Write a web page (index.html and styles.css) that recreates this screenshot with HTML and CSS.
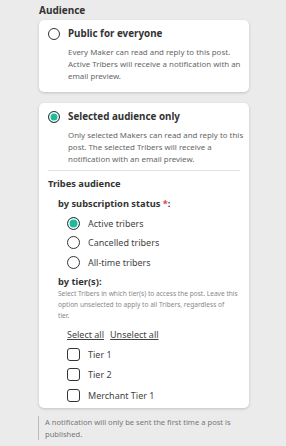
FILE: index.html
```html
<!DOCTYPE html>
<html>
<head>
	<meta charset="UTF-8">
	<link rel="stylesheet" href="styles.css">
</head>
<body>
	<div class="page">
		<h3 class="section-title">Audience</h3>

		<div class="card">
			<div class="option-head">
				<span class="radio"></span>
				<span class="option-title">Public for everyone</span>
			</div>
			<p class="option-desc">Every Maker can read and reply to this post.<br>Active Tribers will receive a notification with an<br>email preview.</p>
		</div>

		<div class="card card-selected">
			<div class="option-head">
				<span class="radio checked"></span>
				<span class="option-title">Selected audience only</span>
			</div>
			<p class="option-desc">Only selected Makers can read and reply to this<br>post. The selected Tribers will receive a<br>notification with an email preview.</p>

			<hr class="divider">

			<h4 class="group-title">Tribes audience</h4>
			<div class="sub">
				<div class="sub-title">by subscription status <span class="req">*</span>:</div>
				<ul class="choices">
					<li><span class="radio checked"></span>Active tribers</li>
					<li><span class="radio"></span>Cancelled tribers</li>
					<li><span class="radio"></span>All-time tribers</li>
				</ul>

				<div class="sub-title tier-title">by tier(s):</div>
				<p class="hint">Select Tribers in which tier(s) to access the post. Leave this<br>option unselected to apply to all Tribers, regardless of<br>tier.</p>

				<div class="links">
					<a href="#">Select all</a>
					<a href="#">Unselect all</a>
				</div>
				<ul class="choices checks">
					<li><span class="checkbox"></span>Tier 1</li>
					<li><span class="checkbox"></span>Tier 2</li>
					<li><span class="checkbox"></span>Merchant Tier 1</li>
				</ul>
			</div>
		</div>

		<p class="note">A notification will only be sent the first time a post is<br>published.</p>
	</div>
</body>
</html>
```
FILE: styles.css
```css
body {
	margin: 0;
	background: #ebebeb;
	font-family: "Noto Sans", "Open Sans", sans-serif;
	color: #333;
}

.page {
	width: 210px;
	padding: 4px 0 0 39px;
}

.section-title {
	margin: 0 0 4px 0;
	font-size: 10px;
	line-height: 12px;
	font-weight: bold;
	color: #333;
}

.card {
	background: #fff;
	border-radius: 5px;
	box-shadow: 0 1px 3px rgba(0, 0, 0, 0.18);
	padding: 7px 9px 10px 9px;
	margin-bottom: 11px;
}

.card-selected {
	padding-bottom: 6px;
}

.option-head {
	display: flex;
	align-items: center;
	gap: 8px;
	height: 12px;
	margin-top: 1px;
}

.option-title {
	font-size: 9.8px;
	font-weight: bold;
	line-height: 12px;
	color: #333;
}

.radio {
	box-sizing: border-box;
	width: 12px;
	height: 12px;
	border: 1.5px solid #333;
	border-radius: 50%;
	flex: none;
	background: #fff;
}

.radio.checked {
	background: #1fb99b;
	box-shadow: inset 0 0 0 1.5px #fff;
}

.option-desc {
	margin: 6px 0 0 20px;
	white-space: nowrap;
	font-size: 7.9px;
	line-height: 12px;
	color: #666;
}

.divider {
	border: none;
	border-top: 1px solid #e2e2e2;
	margin: 5px 0 0 0;
}

.group-title {
	margin: 7px 0 0 0;
	font-size: 9.3px;
	line-height: 12px;
	font-weight: bold;
	color: #333;
}

.sub {
	padding-left: 10px;
}

.sub-title {
	margin-top: 8px;
	font-size: 9.3px;
	line-height: 12px;
	font-weight: bold;
	color: #333;
}

.tier-title {
	margin-top: 7px;
}

.req {
	color: #e04848;
}

.choices {
	list-style: none;
	margin: 6px 0 0 0;
	padding: 0 0 0 9px;
}

.choices li {
	display: flex;
	align-items: center;
	gap: 8px;
	height: 14px;
	margin-bottom: 5.5px;
	font-size: 9px;
	color: #444;
}

.choices li:last-child {
	margin-bottom: 0;
}

.choices .radio {
	width: 13px;
	height: 13px;
}

.checks {
	margin-top: 6px;
}

.checks li {
	margin-bottom: 6.5px;
}

.checkbox {
	box-sizing: border-box;
	width: 13px;
	height: 13px;
	border: 1.5px solid #333;
	border-radius: 3px;
	flex: none;
}

.hint {
	margin: 0;
	white-space: nowrap;
	font-size: 6.6px;
	line-height: 11px;
	color: #888;
}

.links {
	display: flex;
	gap: 6px;
	margin: 8px 0 0 9px;
	font-size: 9px;
	line-height: 12px;
}

.links a {
	color: #444;
	text-decoration: underline;
}

.note {
	margin: -3px 0 0 -1px;
	padding-left: 6px;
	border-left: 1.5px solid #bbb;
	white-space: nowrap;
	font-size: 7.6px;
	line-height: 12px;
	color: #777;
}
```
